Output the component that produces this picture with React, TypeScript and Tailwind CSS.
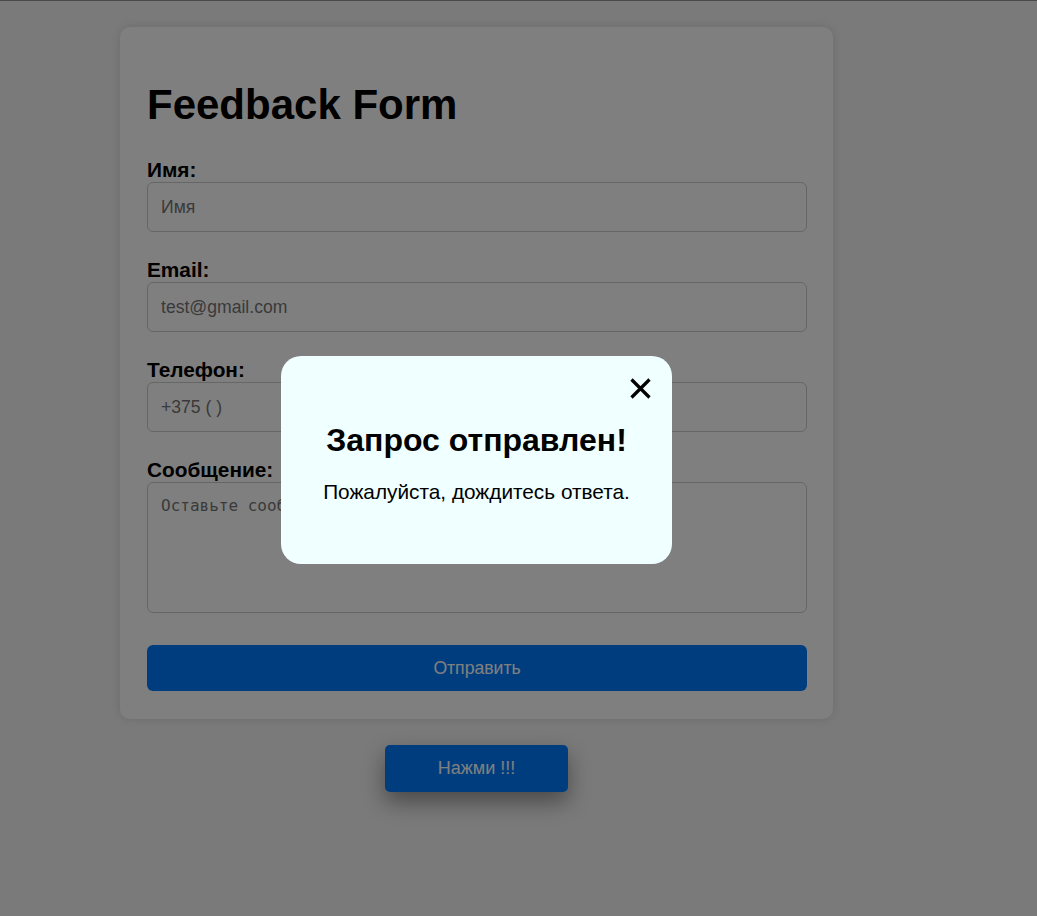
import { useState } from 'react'

function Field({ label, placeholder, textarea }: { label: string; placeholder: string; textarea?: boolean }) {
  return (
    <div className={textarea ? 'mb-[32px]' : 'mb-[26px]'}>
      <label className="block text-[20.8px] leading-[24px] font-bold text-black">{label}</label>
      {textarea ? (
        <textarea
          placeholder={placeholder}
          className="block w-full h-[131px] px-[13px] py-[13px] border border-[#ccc] rounded-[6px] bg-white resize-none font-['DejaVu_Sans_Mono',monospace] text-[16px] leading-[19px] placeholder:text-[#757575] outline-none"
        />
      ) : (
        <input
          placeholder={placeholder}
          className="block w-full h-[50px] px-[13px] border border-[#ccc] rounded-[6px] bg-white text-[17.6px] placeholder:text-[#757575] outline-none"
        />
      )}
    </div>
  )
}

export default function App() {
  const [open, setOpen] = useState(true)

  return (
    <div className="min-h-screen bg-[#f4f4f4] font-['Liberation_Sans',Arial,sans-serif] text-black">
      <div className="h-px bg-[#949494]" />
      <div className="w-[713px] ml-[120px] mt-[26px] bg-white rounded-[10px] shadow-[0_0_10px_rgba(0,0,0,0.12)] pl-[27px] pr-[26px] pt-[27px] pb-[28px]">
        <h1 className="text-[42px] leading-[48px] font-bold mt-[27px] mb-[29px]">Feedback Form</h1>
        <form onSubmit={(e) => e.preventDefault()}>
          <Field label="Имя:" placeholder="Имя" />
          <Field label="Email:" placeholder="test@gmail.com" />
          <Field label="Телефон:" placeholder="+375 ( )" />
          <Field label="Сообщение:" placeholder="Оставьте сообщение" textarea />
          <button
            type="submit"
            onClick={() => setOpen(true)}
            className="block w-full h-[46px] rounded-[6px] bg-[#007bff] text-white text-[17.6px]"
          >
            Отправить
          </button>
        </form>
      </div>
      <div className="w-[713px] ml-[120px] mt-[26px] flex justify-center">
        <button className="w-[183px] h-[47px] rounded-[5px] bg-[#007bff] text-white text-[18px] shadow-[0_10px_22px_rgba(0,0,0,0.4)]">
          Нажми !!!
        </button>
      </div>

      {open && (
        <div className="fixed inset-0 bg-black/50 flex items-center">
          <div className="w-[953px] mt-[4px] flex justify-center">
            <div className="relative w-[391px] h-[208px] rounded-[20px] bg-[#f0ffff] pt-[66px] text-center">
              <button
                onClick={() => setOpen(false)}
                className="absolute top-[22px] right-[21px] w-[21px] h-[21px]"
              >
                <svg viewBox="0 0 21 21" width="21" height="21" fill="none" stroke="black" strokeWidth="3.2">
                  <path d="M1.5 1.5 L19.5 19.5 M19.5 1.5 L1.5 19.5" />
                </svg>
              </button>
              <h2 className="text-[32px] leading-[36.8px] font-bold mb-[21px]">Запрос отправлен!</h2>
              <p className="text-[20.8px] leading-[24px]">Пожалуйста, дождитесь ответа.</p>
            </div>
          </div>
        </div>
      )}
    </div>
  )
}
